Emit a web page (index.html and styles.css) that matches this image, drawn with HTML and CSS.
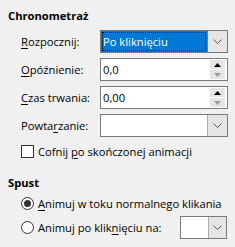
FILE: index.html
```html
<!DOCTYPE html>
<html lang="pl">
<head>
    <meta charset="UTF-8">
    <title>Chronometraż</title>
    <link rel="stylesheet" href="styles.css">
</head>
<body>
    <div class="panel">
        <div class="heading">Chronometraż</div>
        <div class="fields">
            <label class="label"><u>R</u>ozpocznij:</label>
            <div class="combo focused">
                <div class="value"><span class="focus">Po kliknięciu</span></div>
                <div class="arrow"><svg width="9" height="5" viewBox="0 0 9 5"><path d="M0.5 0.5 L4.5 4.5 L8.5 0.5" fill="none" stroke="#555" stroke-width="1"/></svg></div>
            </div>

            <label class="label"><u>O</u>późnienie:</label>
            <div class="spin">
                <div class="value">0,0</div>
                <div class="buttons">
                    <div class="btn"><svg width="7" height="4" viewBox="0 0 7 4"><path d="M0 4 L3.5 0 L7 4 Z" fill="#000"/></svg></div>
                    <div class="btn"><svg width="7" height="4" viewBox="0 0 7 4"><path d="M0 0 L3.5 4 L7 0 Z" fill="#9a9a9a"/></svg></div>
                </div>
            </div>

            <label class="label"><u>C</u>zas trwania:</label>
            <div class="spin">
                <div class="value">0,00</div>
                <div class="buttons">
                    <div class="btn"><svg width="7" height="4" viewBox="0 0 7 4"><path d="M0 4 L3.5 0 L7 4 Z" fill="#000"/></svg></div>
                    <div class="btn"><svg width="7" height="4" viewBox="0 0 7 4"><path d="M0 0 L3.5 4 L7 0 Z" fill="#9a9a9a"/></svg></div>
                </div>
            </div>

            <label class="label">Powta<u>r</u>zanie:</label>
            <div class="combo">
                <div class="value"></div>
                <div class="arrow"><svg width="9" height="5" viewBox="0 0 9 5"><path d="M0.5 0.5 L4.5 4.5 L8.5 0.5" fill="none" stroke="#555" stroke-width="1"/></svg></div>
            </div>
        </div>
        <div class="check-row">
            <span class="checkbox"></span>
            <span>Cofnij <u>p</u>o skończonej animacji</span>
        </div>

        <div class="heading second">Spust</div>
        <div class="radio-row">
            <span class="radio checked"></span>
            <span><u>A</u>nimuj w toku normalnego klikania</span>
        </div>
        <div class="radio-row">
            <span class="radio"></span>
            <span class="radio-text">Animuj po klik<u>n</u>ięciu na:</span>
            <div class="combo small">
                <div class="value"></div>
                <div class="arrow"><svg width="9" height="5" viewBox="0 0 9 5"><path d="M0.5 0.5 L4.5 4.5 L8.5 0.5" fill="none" stroke="#555" stroke-width="1"/></svg></div>
            </div>
        </div>
    </div>
</body>
</html>
```

FILE: styles.css
```css
body {
    margin: 0;
    background: #f0f0f0;
    font-family: "Open Sans", "Noto Sans", sans-serif;
    font-size: 11.2px;
    color: #000;
}

.panel {
    padding: 8px 0 0 8px;
    width: 220px;
}

.heading {
    font-weight: bold;
    line-height: 16px;
}

.heading.second {
    margin-top: 16px;
}

u {
    text-decoration-thickness: 1px;
    text-underline-offset: 2px;
}

.fields {
    display: grid;
    grid-template-columns: 79px 128px;
    grid-auto-rows: 23px;
    row-gap: 5px;
    margin: 6px 0 0 13px;
}

.label {
    display: flex;
    align-items: center;
}

.combo,
.spin {
    display: flex;
    border: 1px solid #7a7a7a;
    background: #fff;
    box-sizing: border-box;
}

.value {
    flex: 1;
    display: flex;
    align-items: center;
    padding-left: 2px;
}

.combo.focused .value {
    background: #0078d7;
    color: #fff;
    padding: 1px;
}

.focus {
    flex: 1;
    align-self: stretch;
    display: flex;
    align-items: center;
    outline: 1px dotted #000;
    outline-offset: -1px;
    padding-left: 1px;
}

.arrow {
    width: 19px;
    display: flex;
    align-items: center;
    justify-content: center;
    background: #e5e5e5;
    border-left: 1px solid #adadad;
}

.combo.focused .arrow {
    border-left-color: #7a7a7a;
}

.buttons {
    display: flex;
    flex-direction: column;
    justify-content: center;
    gap: 1px;
    padding: 1px 2px 1px 0;
}

.btn {
    width: 15px;
    height: 9px;
    background: #e5e5e5;
    display: flex;
    align-items: center;
    justify-content: center;
}

.check-row,
.radio-row {
    display: flex;
    align-items: center;
    gap: 4px;
    margin-left: 13px;
}

.check-row {
    margin-top: 6px;
    height: 16px;
}

.checkbox {
    width: 13px;
    height: 13px;
    box-sizing: border-box;
    border: 1px solid #333;
    background: #fff;
}

.radio-row {
    height: 24px;
}

.radio-row:first-of-type {
    margin-top: 4px;
}

.radio {
    width: 13px;
    height: 13px;
    box-sizing: border-box;
    border: 1px solid #333;
    border-radius: 50%;
    background: #fff;
    display: flex;
    align-items: center;
    justify-content: center;
}

.radio.checked::after {
    content: '';
    width: 7px;
    height: 7px;
    border-radius: 50%;
    background: #333;
}

.radio-text {
    width: 138px;
}

.combo.small {
    width: 47px;
    height: 23px;
}

.combo.small .arrow {
    width: 17px;
}
```
